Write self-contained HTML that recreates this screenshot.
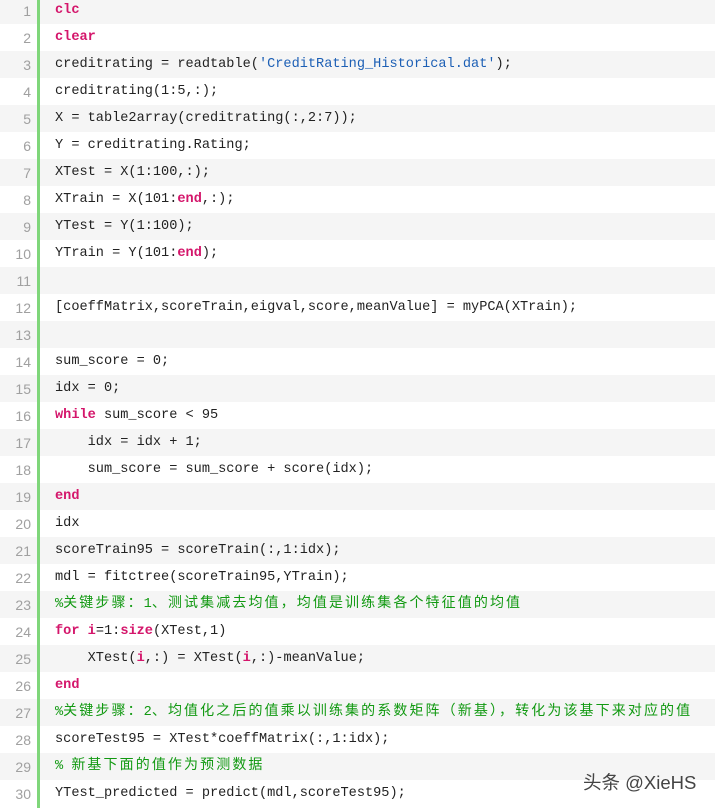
<!DOCTYPE html>
<html><head><meta charset="utf-8"><style>
body{margin:0;width:715px;height:808px;overflow:hidden;background:#fff;position:relative;font-family:"Liberation Mono","Noto Sans CJK SC",monospace;}
.r{position:absolute;left:0;width:715px;height:27px;line-height:28px;font-size:13.6px;color:#222;white-space:pre;}
.n{position:absolute;left:0;width:31px;text-align:right;color:#a0a0a0;font-family:"Liberation Sans",sans-serif;font-size:14px}
.c{position:absolute;left:55px}
.k{color:#d4166b;font-weight:bold}
.s{color:#1c5fb5}
.g{color:#119911;font-family:"Liberation Mono","WenQuanYi Zen Hei",monospace;font-size:13.6px}
.g b{font-weight:normal;font-family:"WenQuanYi Zen Hei","Noto Sans CJK SC",sans-serif;font-size:14px;letter-spacing:2.1px;line-height:20px}
.bar{position:absolute;left:37px;top:0;width:3px;height:808px;background:#7fd67a}
.wm{position:absolute;left:583px;top:769px;font-family:"Liberation Sans","Noto Sans CJK SC",sans-serif;font-size:18.5px;color:#444;}
</style></head><body>
<div class="r" style="top:-3px;background:#f5f5f5"><span class="n">1</span><span class="c"><span class="k">clc</span></span></div>
<div class="r" style="top:24px;background:#fff"><span class="n">2</span><span class="c"><span class="k">clear</span></span></div>
<div class="r" style="top:51px;background:#f5f5f5"><span class="n">3</span><span class="c">creditrating = readtable(<span class="s">'CreditRating_Historical.dat'</span>);</span></div>
<div class="r" style="top:78px;background:#fff"><span class="n">4</span><span class="c">creditrating(1:5,:);</span></div>
<div class="r" style="top:105px;background:#f5f5f5"><span class="n">5</span><span class="c">X = table2array(creditrating(:,2:7));</span></div>
<div class="r" style="top:132px;background:#fff"><span class="n">6</span><span class="c">Y = creditrating.Rating;</span></div>
<div class="r" style="top:159px;background:#f5f5f5"><span class="n">7</span><span class="c">XTest = X(1:100,:);</span></div>
<div class="r" style="top:186px;background:#fff"><span class="n">8</span><span class="c">XTrain = X(101:<span class="k">end</span>,:);</span></div>
<div class="r" style="top:213px;background:#f5f5f5"><span class="n">9</span><span class="c">YTest = Y(1:100);</span></div>
<div class="r" style="top:240px;background:#fff"><span class="n">10</span><span class="c">YTrain = Y(101:<span class="k">end</span>);</span></div>
<div class="r" style="top:267px;background:#f5f5f5"><span class="n">11</span><span class="c"></span></div>
<div class="r" style="top:294px;background:#fff"><span class="n">12</span><span class="c">[coeffMatrix,scoreTrain,eigval,score,meanValue] = myPCA(XTrain);</span></div>
<div class="r" style="top:321px;background:#f5f5f5"><span class="n">13</span><span class="c"></span></div>
<div class="r" style="top:348px;background:#fff"><span class="n">14</span><span class="c">sum_score = 0;</span></div>
<div class="r" style="top:375px;background:#f5f5f5"><span class="n">15</span><span class="c">idx = 0;</span></div>
<div class="r" style="top:402px;background:#fff"><span class="n">16</span><span class="c"><span class="k">while</span> sum_score &lt; 95</span></div>
<div class="r" style="top:429px;background:#f5f5f5"><span class="n">17</span><span class="c">    idx = idx + 1;</span></div>
<div class="r" style="top:456px;background:#fff"><span class="n">18</span><span class="c">    sum_score = sum_score + score(idx);</span></div>
<div class="r" style="top:483px;background:#f5f5f5"><span class="n">19</span><span class="c"><span class="k">end</span></span></div>
<div class="r" style="top:510px;background:#fff"><span class="n">20</span><span class="c">idx</span></div>
<div class="r" style="top:537px;background:#f5f5f5"><span class="n">21</span><span class="c">scoreTrain95 = scoreTrain(:,1:idx);</span></div>
<div class="r" style="top:564px;background:#fff"><span class="n">22</span><span class="c">mdl = fitctree(scoreTrain95,YTrain);</span></div>
<div class="r" style="top:591px;background:#f5f5f5"><span class="n">23</span><span class="c g">%<b>关键步骤：</b>1<b>、测试集减去均值，均值是训练集各个特征值的均值</b></span></div>
<div class="r" style="top:618px;background:#fff"><span class="n">24</span><span class="c"><span class="k">for</span> <span class="k">i</span>=1:<span class="k">size</span>(XTest,1)</span></div>
<div class="r" style="top:645px;background:#f5f5f5"><span class="n">25</span><span class="c">    XTest(<span class="k">i</span>,:) = XTest(<span class="k">i</span>,:)-meanValue;</span></div>
<div class="r" style="top:672px;background:#fff"><span class="n">26</span><span class="c"><span class="k">end</span></span></div>
<div class="r" style="top:699px;background:#f5f5f5"><span class="n">27</span><span class="c g">%<b>关键步骤：</b>2<b>、均值化之后的值乘以训练集的系数矩阵（新基），转化为该基下来对应的值</b></span></div>
<div class="r" style="top:726px;background:#fff"><span class="n">28</span><span class="c">scoreTest95 = XTest*coeffMatrix(:,1:idx);</span></div>
<div class="r" style="top:753px;background:#f5f5f5"><span class="n">29</span><span class="c g">% <b>新基下面的值作为预测数据</b></span></div>
<div class="r" style="top:780px;background:#fff"><span class="n">30</span><span class="c">YTest_predicted = predict(mdl,scoreTest95);</span></div>
<div class="bar"></div>
<div class="wm">头条 @XieHS</div>
</body></html>
